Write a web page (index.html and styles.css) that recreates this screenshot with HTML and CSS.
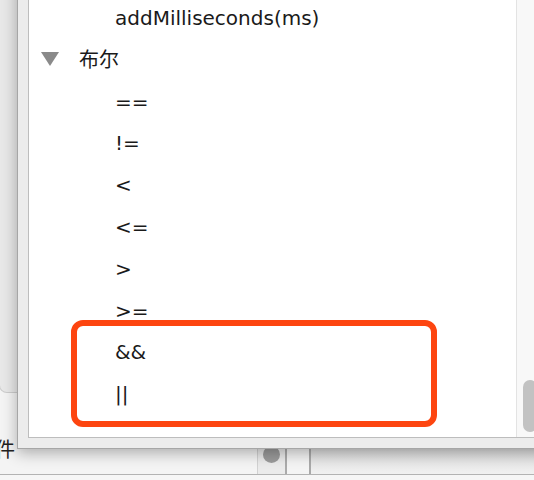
FILE: index.html
```html
<!DOCTYPE html>
<html lang="zh-CN">
<head>
  <meta charset="UTF-8" />
  <meta name="viewport" content="width=device-width, initial-scale=1.0">
  <title>布尔</title>
  <link rel="stylesheet" href="styles.css">
</head>
<body>

  <!-- Janela de trás -->
  <div class="backdrop">
    <div class="bg-card"></div>
    <div class="bg-row">
      <span class="bg-label">件</span>
      <div class="knob-box"><span class="knob"></span></div>
      <div class="field-box"></div>
    </div>
    <div class="bg-foot"></div>
  </div>

  <!-- Menu suspenso -->
  <div class="popup">
    <div class="list-frame">
      <ul class="list">
        <li class="item">addMilliseconds(ms)</li>
        <li class="group">
          <svg class="toggle" width="18" height="14" viewBox="0 0 18 14">
            <polygon points="0,0 18,0 9,14" fill="#8a8a8a" />
          </svg>
          <span class="group-label">布尔</span>
        </li>
        <li class="item">==</li>
        <li class="item">!=</li>
        <li class="item">&lt;</li>
        <li class="item">&lt;=</li>
        <li class="item">&gt;</li>
        <li class="item">&gt;=</li>
        <li class="item">&amp;&amp;</li>
        <li class="item">||</li>
      </ul>
      <div class="scroll-track">
        <span class="scroll-thumb"></span>
      </div>
    </div>
  </div>

  <!-- Destaque vermelho -->
  <div class="callout"></div>

</body>
</html>
```

FILE: styles.css
```css
body {
  margin: 0;
  width: 534px;
  height: 480px;
  overflow: hidden;
  position: relative;
  background: #f4f4f4;
  font-family: 'DejaVu Sans', 'Noto Sans CJK SC', sans-serif;
  color: #1a1a1a;
}

/* janela de trás */
.backdrop {
  display: flex;
  flex-direction: column;
  height: 480px;
}

.bg-card {
  height: 392px;
  margin-left: -1px;
  background: #e8e8e8;
  border: 1px solid #cdcdcd;
  border-top: none;
  border-bottom-left-radius: 8px;
}

.bg-row {
  display: grid;
  grid-template-columns: 257px 30px 22px 1fr;
  height: 81px;
  border-bottom: 1px solid #b3b3b3;
}

.bg-label {
  font-size: 20px;
  line-height: 20px;
  margin: 46px 0 0 -5px;
  font-family: 'Noto Sans CJK SC', sans-serif;
  color: #222;
}

.knob-box {
  grid-column: 2;
  align-self: end;
  height: 28px;
  background: #ebebeb;
  border-left: 1px solid #d2d2d2;
  border-right: 2px solid #ababab;
  display: flex;
  justify-content: center;
}

.knob {
  width: 17px;
  height: 17px;
  border-radius: 50%;
  background: #9b9b9b;
}

.field-box {
  grid-column: 4;
  align-self: end;
  height: 26px;
  border-left: 2px solid #a9a9a9;
  background: linear-gradient(#dadada, #f1f1f1);
}

.bg-foot {
  flex: 1;
  background: #f6f6f6;
}

/* menu suspenso */
.popup {
  position: absolute;
  left: 17px;
  top: -20px;
  width: 540px;
  height: 469px;
  box-sizing: border-box;
  padding: 10px;
  background: #ececec;
  border: 1px solid #a6a6a6;
  box-shadow: 0 4px 14px rgba(0, 0, 0, 0.3);
}

.list-frame {
  display: flex;
  height: 100%;
  box-sizing: border-box;
  background: #fff;
  border: 1px solid #bdbdbd;
  overflow: hidden;
}

.list {
  flex: 1;
  list-style: none;
  margin: 0;
  padding: 6px 0 0;
  font-size: 20px;
}

.list li {
  height: 41.8px;
  line-height: 41.8px;
  white-space: nowrap;
}

.item {
  padding-left: 86px;
}

.group {
  display: flex;
  align-items: center;
  padding-left: 12px;
}

.toggle {
  margin-bottom: 3px;
}

.group-label {
  margin-left: 20px;
}

.scroll-track {
  flex: 0 0 29px;
  box-sizing: border-box;
  display: flex;
  flex-direction: column;
  justify-content: flex-end;
  padding: 0 0 5px 6px;
  background: #f8f8f8;
  border-left: 1px solid #e3e3e3;
}

.scroll-thumb {
  width: 14px;
  height: 52px;
  border-radius: 7px;
  background: #c2c2c2;
}

/* destaque */
.callout {
  position: absolute;
  left: 71px;
  top: 320px;
  width: 366px;
  height: 107px;
  box-sizing: border-box;
  border: 6px solid #fd4510;
  border-radius: 12px;
}
```
